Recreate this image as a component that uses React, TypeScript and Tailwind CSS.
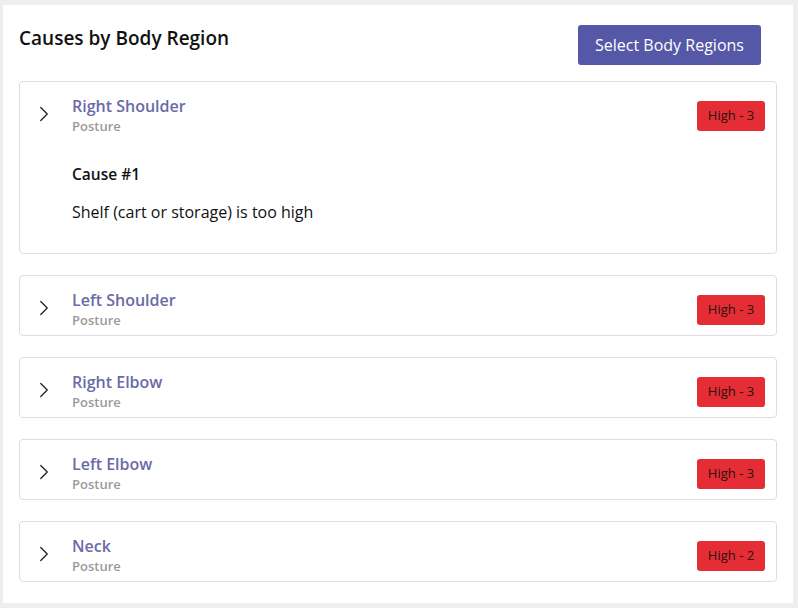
import { ChevronRight } from 'lucide-react'

type Region = {
  name: string
  category: string
  level: string
  expanded?: boolean
  causes?: string[]
}

const regions: Region[] = [
  {
    name: 'Right Shoulder',
    category: 'Posture',
    level: 'High - 3',
    expanded: true,
    causes: ['Shelf (cart or storage) is too high'],
  },
  { name: 'Left Shoulder', category: 'Posture', level: 'High - 3' },
  { name: 'Right Elbow', category: 'Posture', level: 'High - 3' },
  { name: 'Left Elbow', category: 'Posture', level: 'High - 3' },
  { name: 'Neck', category: 'Posture', level: 'High - 2' },
]

function RegionCard({ region }: { region: Region }) {
  return (
    <div className="rounded-[4px] border border-[#dddbe8] bg-white">
      <div className="flex items-center pt-[13px] pb-[5px] pl-[11px] pr-[11px]">
        <ChevronRight
          className="mb-[4px] h-[26px] w-[26px] text-[#222]"
          strokeWidth={1.2}
        />
        <div className="ml-[15px] flex-1">
          <div className="text-[16px] font-semibold leading-[22px] text-[#6b6aa8]">
            {region.name}
          </div>
          <div className="text-[13px] font-semibold leading-[19px] text-[#9a9a9a]">
            {region.category}
          </div>
        </div>
        <div className="flex h-[30px] w-[68px] items-center justify-center rounded-[3px] bg-[#e52d35] text-[13px] text-[#2a1012]">
          {region.level}
        </div>
      </div>
      {region.expanded && region.causes && (
        <div className="pl-[52px] pt-[22px] pb-[30px]">
          {region.causes.map((cause, index) => (
            <div key={index}>
              <div className="text-[15.5px] font-semibold leading-[22px] text-[#111]">
                Cause #{index + 1}
              </div>
              <div className="mt-[16px] text-[16px] leading-[22px] text-[#111]">
                {cause}
              </div>
            </div>
          ))}
        </div>
      )}
    </div>
  )
}

export default function App() {
  return (
    <div
      className="min-h-[608px] bg-[#eeeeee] pt-[5px] pl-[3px] pr-[5px] pb-[5px]"
      style={{ fontFamily: '"Open Sans", sans-serif' }}
    >
      <div className="bg-white pl-[16px] pr-[16px] pt-[20px] pb-[21px]">
        <div className="flex items-start justify-between">
          <h1 className="mt-0 text-[19px] font-semibold leading-[26px] text-[#111]">
            Causes by Body Region
          </h1>
          <button className="mr-[16px] h-[40px] w-[183px] rounded-[3px] bg-[#5558a6] text-[16px] text-white">
            Select Body Regions
          </button>
        </div>
        <div className="mt-[16px] flex flex-col gap-[21px]">
          {regions.map(region => (
            <RegionCard key={region.name} region={region} />
          ))}
        </div>
      </div>
    </div>
  )
}
